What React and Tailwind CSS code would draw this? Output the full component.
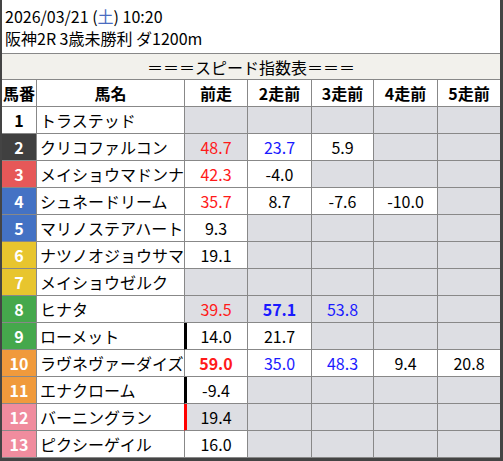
import React from 'react';

const WAKU = {
  1: 'bg-white text-black',
  2: 'bg-[#404040] text-white',
  3: 'bg-[#e65858] text-white',
  4: 'bg-[#4472c4] text-white',
  5: 'bg-[#4472c4] text-white',
  6: 'bg-[#e8c52e] text-white',
  7: 'bg-[#e8c52e] text-white',
  8: 'bg-[#45a84c] text-white',
  9: 'bg-[#45a84c] text-white',
  10: 'bg-[#f09a3c] text-white',
  11: 'bg-[#f09a3c] text-white',
  12: 'bg-[#f08c9e] text-white',
  13: 'bg-[#f08c9e] text-white',
};

// each cell: [value, color, bold, grayBg]
const rows = [
  { no: 1, name: 'トラステッド', cells: [] },
  { no: 2, name: 'クリコファルコン', cells: [['48.7', 'r', false, true], ['23.7', 'b'], ['5.9']] },
  { no: 3, name: 'メイショウマドンナ', cells: [['42.3', 'r'], ['-4.0']] },
  { no: 4, name: 'シュネードリーム', cells: [['35.7', 'r'], ['8.7'], ['-7.6'], ['-10.0']] },
  { no: 5, name: 'マリノステアハート', cells: [['9.3']] },
  { no: 6, name: 'ナツノオジョウサマ', cells: [['19.1']] },
  { no: 7, name: 'メイショウゼルク', cells: [] },
  { no: 8, name: 'ヒナタ', cells: [['39.5', 'r', false, true], ['57.1', 'b', true, true], ['53.8', 'b', false, true]] },
  { no: 9, name: 'ローメット', bar: 'k', cells: [['14.0'], ['21.7']] },
  { no: 10, name: 'ラヴネヴァーダイズ', cells: [['59.0', 'r', true], ['35.0', 'b'], ['48.3', 'b'], ['9.4'], ['20.8']] },
  { no: 11, name: 'エナクローム', bar: 'k', cells: [['-9.4']] },
  { no: 12, name: 'バーニングラン', bar: 'r', cells: [['19.4', null, false, true]] },
  { no: 13, name: 'ピクシーゲイル', cells: [['16.0']] },
];

const cell = 'h-[27px] border-b border-r border-[#888] flex items-center';

function ValueCell({ data, last, bar }) {
  const empty = !data;
  const gray = empty || data[3];
  const color = !empty && data[1] === 'r' ? 'text-[#ff1a1a]' : !empty && data[1] === 'b' ? 'text-[#1a1aff]' : 'text-black';
  const barCls = bar === 'k' ? 'shadow-[inset_2px_0_0_#000]' : bar === 'r' ? 'shadow-[inset_2px_0_0_#ff0000]' : '';
  return (
    <div className={`h-[27px] border-b border-[#888] flex items-center justify-center ${last ? '' : 'border-r'} ${gray ? 'bg-[#dddee3]' : 'bg-white'} ${color} ${!empty && data[2] ? 'font-bold' : ''} ${barCls}`}>
      {empty ? '' : data[0]}
    </div>
  );
}

export default function App() {
  const heads = ['前走', '2走前', '3走前', '4走前', '5走前'];
  return (
    <div className="w-[503px] h-[461px] bg-white border-l-2 border-r-[3px] border-b-[3px] border-[#444] text-[16px] text-black overflow-hidden" style={{ fontFamily: '"Noto Sans CJK JP", "Noto Sans", sans-serif' }}>
      <div className="h-[53px] pl-[3px] pt-[5px] leading-[22px]">
        <div>2026/03/21 (<span className="text-[#4a6cc0]">土</span>) 10:20</div>
        <div>阪神2R 3歳未勝利 ダ1200m</div>
      </div>
      <div className="h-[27px] border-t border-b border-[#888] bg-[#f2f1ec] flex items-center justify-center">
        ＝＝＝スピード指数表＝＝＝
      </div>
      <div className="grid grid-cols-[35px_148px_63px_64px_62px_64px_62px]">
        <div className={`${cell} justify-center font-bold`}>馬番</div>
        <div className={`${cell} justify-center font-bold`}>馬名</div>
        {heads.map((h, i) => (
          <div key={h} className={`h-[27px] border-b border-[#888] flex items-center justify-center font-bold ${i === 4 ? '' : 'border-r'}`}>{h}</div>
        ))}
        {rows.map((r) => (
          <React.Fragment key={r.no}>
            <div className={`${cell} justify-center font-bold ${WAKU[r.no]}`}>{r.no}</div>
            <div className={`h-[27px] border-b border-r flex items-center pl-[3px] whitespace-nowrap overflow-hidden ${r.bar === 'k' ? 'border-r-black border-b-[#888]' : r.bar === 'r' ? 'border-r-[#ff0000] border-b-[#888]' : 'border-[#888]'}`}>{r.name}</div>
            {[0, 1, 2, 3, 4].map((i) => (
              <ValueCell key={i} data={r.cells[i]} last={i === 4} bar={i === 0 ? r.bar : null} />
            ))}
          </React.Fragment>
        ))}
      </div>
    </div>
  );
}
